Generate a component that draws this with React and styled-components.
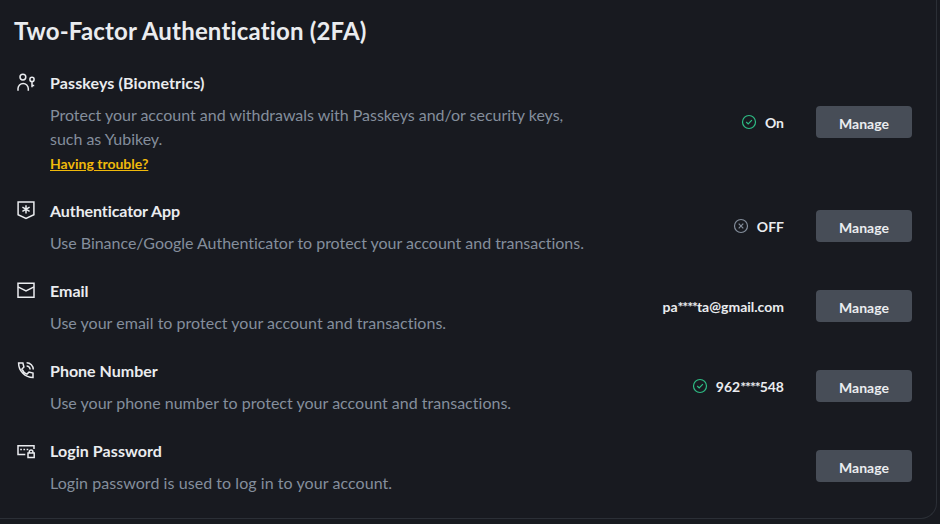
import styled, { createGlobalStyle } from "styled-components";

const GlobalStyle = createGlobalStyle`
  * {
    box-sizing: border-box;
  }

  body {
    margin: 0;
    background-color: #181a20;
    color: #eaecef;
    font-family: Lato, "Liberation Sans", sans-serif;
    font-variant-ligatures: none;
    overflow: hidden;
  }
`;

const Page = styled.div`
  height: 524px;
  padding-right: 3px;
`;

const Panel = styled.section`
  height: 519px;
  padding: 16px 24px 0 14px;
  border: solid #2b2f36;
  border-width: 0 1px 1px 0;
  border-bottom-right-radius: 16px;
`;

const Heading = styled.h2`
  margin: 0 0 24px;
  height: 32px;
  font-size: 24px;
  font-weight: 700;
  line-height: 29px;
  letter-spacing: 0.17px;
  white-space: nowrap;
`;

const List = styled.div`
  display: flex;
  flex-direction: column;
  gap: 24px;
  padding-left: 2px;
`;

const Row = styled.div`
  display: flex;
`;

const RowIcon = styled.svg`
  flex: none;
  width: 20px;
  height: 20px;
  margin-right: 14px;
  fill: none;
  stroke: #eaecef;
  stroke-width: 1.5;
`;

const Info = styled.div`
  flex: 1;
  margin-top: -1px;
  padding-bottom: 1px;
`;

const Title = styled.div`
  margin-bottom: 8px;
  font-size: 16px;
  font-weight: 700;
  line-height: 24px;
  letter-spacing: ${(props) => props.$track || 0}px;
`;

const Desc = styled.div`
  color: #848e9c;
  font-size: 16px;
  line-height: 24px;
  letter-spacing: ${(props) => props.$track || 0}px;
  white-space: pre-line;
`;

const HelpLink = styled.a`
  display: block;
  height: 24px;
  color: #f0b90b;
  font-size: 14px;
  font-weight: 700;
  line-height: 26px;
  text-decoration: underline;
`;

const Actions = styled.div`
  display: flex;
  align-items: center;
  padding-bottom: 4px;
`;

const StatusIcon = styled.svg`
  width: 16px;
  height: 16px;
  margin-right: 8px;
  fill: none;
  stroke: ${(props) => (props.$on ? "#2ebd85" : "#848e9c")};
  stroke-width: 1.2;
`;

const StatusText = styled.span`
  margin-right: 32px;
  padding-top: 2px;
  font-size: 14px;
  font-weight: 700;
  line-height: 20px;
`;

const Mask = styled.span`
  letter-spacing: -1.1px;
`;

const ManageButton = styled.button`
  width: 96px;
  height: 32px;
  padding: 2px 0 0;
  border: 0;
  border-radius: 4px;
  background-color: #474d57;
  color: #eaecef;
  font-family: inherit;
  font-size: 14px;
  font-weight: 700;
  cursor: pointer;
`;

const icons = {
  passkey: (
    <>
      <circle cx="6.9" cy="5.1" r="2.9" />
      <path d="M2 18.8V16.6a5.15 5.15 0 0 1 10.3 0v2.2" />
      <circle cx="16" cy="7.4" r="2.1" />
      <path d="M16 9.5v5.8M16 13.4h2.2" />
    </>
  ),
  shield: (
    <>
      <path d="M2.1 2.1h15.8v12.7L10 18.5l-7.9-3.7z" />
      <path d="M10 5.2v8.2M6.4 7.2l7.2 4.2M13.6 7.2l-7.2 4.2" />
    </>
  ),
  email: (
    <>
      <path d="M2 3.2h16v14H2z" />
      <path d="M2 6.8l8 4 8-4" />
    </>
  ),
  phone: (
    <>
      <path d="M2.6 3h4.3l1 4-2 2.1c.9 2.2 2.8 4.1 5 5l2.1-2 4 1v4.3C9 17.4 2.6 11 2.6 3z" />
      <path d="M10.6 2.7a6.7 6.7 0 0 1 6.7 6.7M10.6 5.9a3.5 3.5 0 0 1 3.5 3.5" />
    </>
  ),
  password: (
    <>
      <path d="M9.3 14.6H2V5.7h16v3.4" />
      <path d="M4.2 9.5h1.7M7.4 9.5h1.7M10.6 9.5h1.7" />
      <path d="M12 12.9h6.2v4.7H12zM13.3 12.9v-1.1a1.8 1.8 0 0 1 3.6 0v1.1" />
    </>
  ),
};

const methods = [
  {
    icon: "passkey",
    title: "Passkeys (Biometrics)",
    titleTrack: 0.11,
    desc: "Protect your account and withdrawals with Passkeys and/or security keys,\nsuch as Yubikey.",
    descTrack: -0.02,
    help: "Having trouble?",
    enabled: true,
    status: ["On"],
  },
  {
    icon: "shield",
    title: "Authenticator App",
    titleTrack: -0.09,
    desc: "Use Binance/Google Authenticator to protect your account and transactions.",
    descTrack: -0.03,
    enabled: false,
    status: ["OFF"],
  },
  {
    icon: "email",
    title: "Email",
    desc: "Use your email to protect your account and transactions.",
    descTrack: 0.02,
    status: ["pa", "ta@gmail.com"],
  },
  {
    icon: "phone",
    title: "Phone Number",
    desc: "Use your phone number to protect your account and transactions.",
    descTrack: 0.015,
    enabled: true,
    status: ["962", "548"],
  },
  {
    icon: "password",
    title: "Login Password",
    titleTrack: 0.07,
    desc: "Login password is used to log in to your account.",
    descTrack: 0.06,
  },
];

function Status({ enabled, parts }) {
  const [head, tail] = parts;

  return (
    <>
      {enabled !== undefined && (
        <StatusIcon viewBox="0 0 16 16" $on={enabled}>
          <circle cx="8" cy="8" r="6.5" />
          <path
            d={enabled ? "M5.2 8l2 2 3.7-3.8" : "M5.7 5.7l4.6 4.6M10.3 5.7l-4.6 4.6"}
          />
        </StatusIcon>
      )}
      <StatusText>
        {head}
        {tail && <Mask>****</Mask>}
        {tail}
      </StatusText>
    </>
  );
}

function App() {
  return (
    <Page>
      <GlobalStyle />
      <Panel>
        <Heading>Two-Factor Authentication (2FA)</Heading>
        <List>
          {methods.map((item) => (
            <Row key={item.title}>
              <RowIcon viewBox="0 0 20 20">{icons[item.icon]}</RowIcon>
              <Info>
                <Title $track={item.titleTrack}>{item.title}</Title>
                <Desc $track={item.descTrack}>{item.desc}</Desc>
                {item.help && <HelpLink>{item.help}</HelpLink>}
              </Info>
              <Actions>
                {item.status && (
                  <Status enabled={item.enabled} parts={item.status} />
                )}
                <ManageButton>Manage</ManageButton>
              </Actions>
            </Row>
          ))}
        </List>
      </Panel>
    </Page>
  );
}

export default App;
